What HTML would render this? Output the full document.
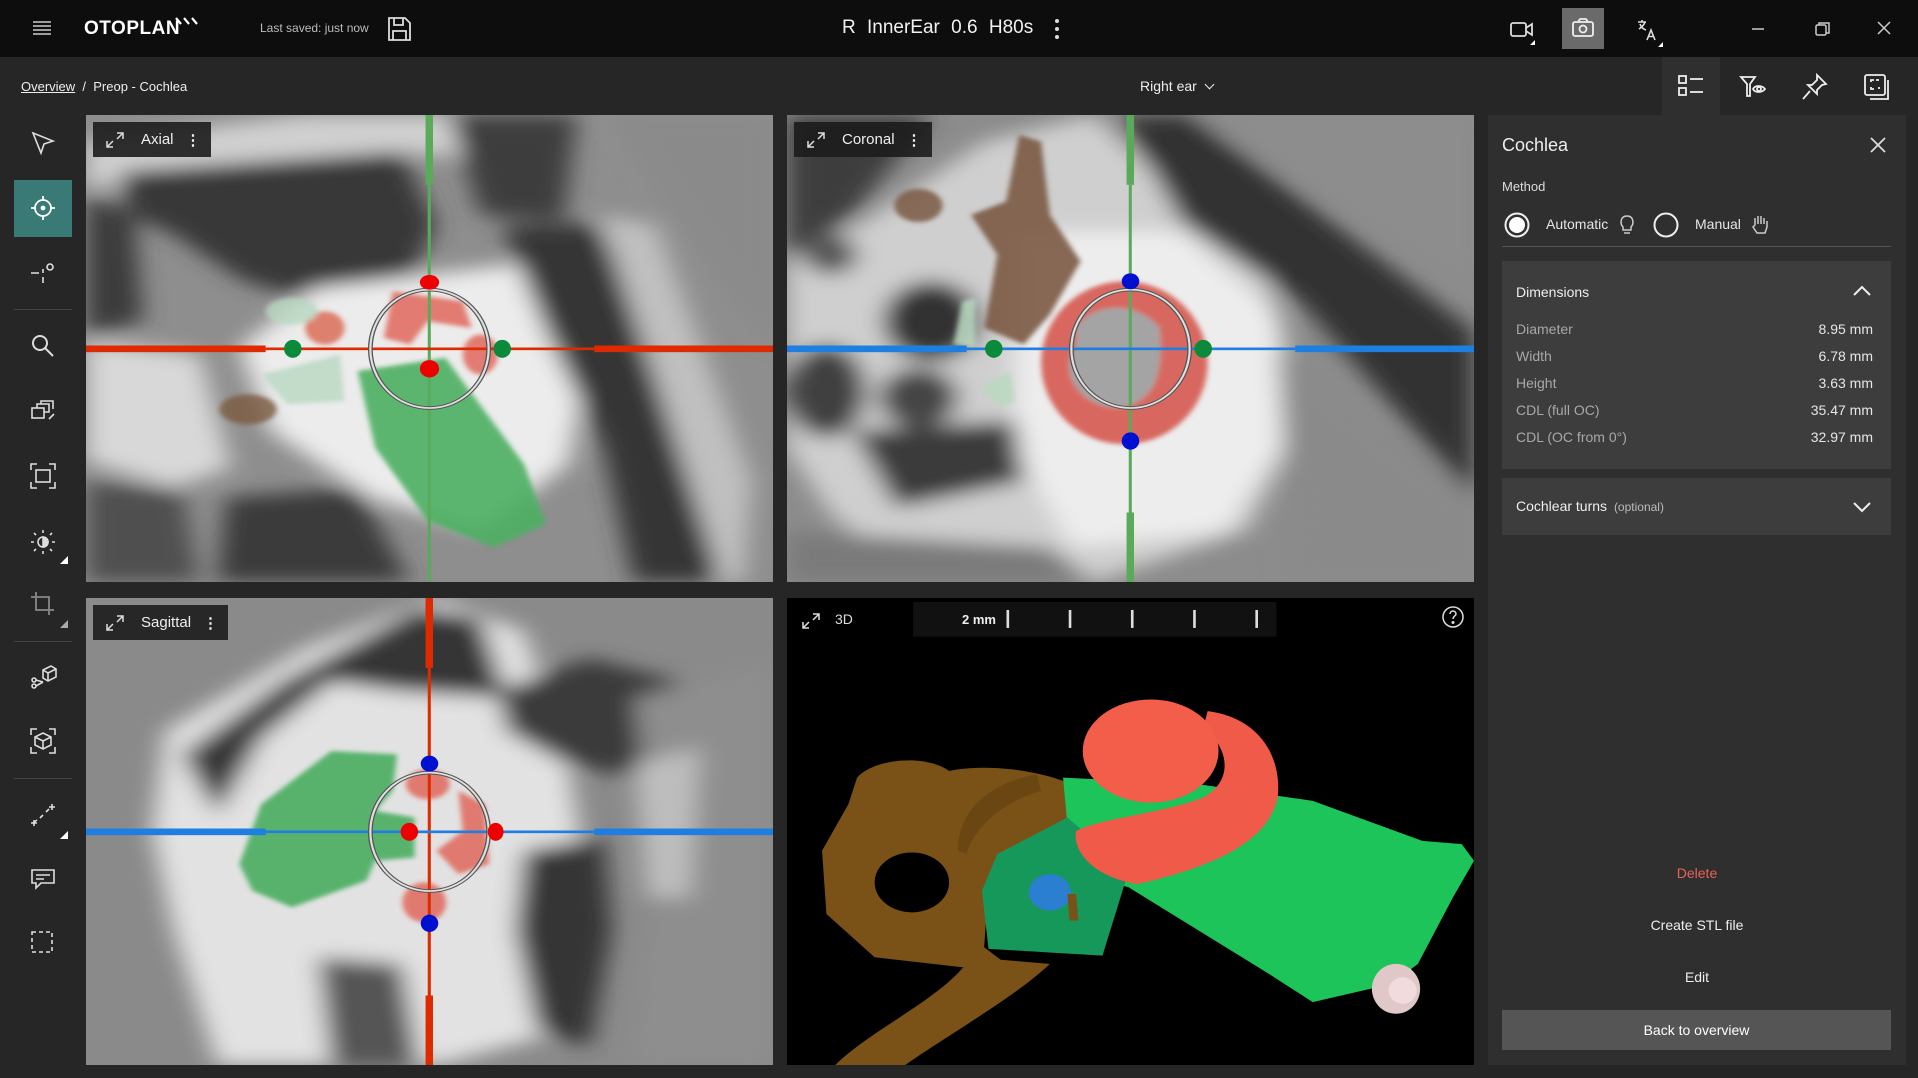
<!DOCTYPE html>
<html><head><meta charset="utf-8"><style>
*{margin:0;padding:0;box-sizing:border-box}
body{width:1918px;height:1078px;background:#262626;font-family:"Liberation Sans",sans-serif;color:#fff;position:relative;overflow:hidden}
.abs{position:absolute}
.top{left:0;top:0;width:1918px;height:57px;background:#0d0d0d}
.vp{position:absolute;width:687px;height:467px;overflow:hidden}
.vp svg.bg{position:absolute;left:0;top:0;width:687px;height:467px}
.lbl{position:absolute;left:7px;top:7px;height:35px;background:rgba(28,28,28,.9);display:flex;align-items:center;padding:0 10px 0 12px;font-size:15px;color:#eee}
.tb svg{position:absolute;left:29px;width:28px;height:28px}
.row{display:flex;justify-content:space-between;font-size:14px;height:27px;align-items:center}
.row span:first-child{color:#a8a8a8}
.row span:last-child{color:#e6e6e6}
</style></head><body>
<div class="abs top"></div>
<svg class="abs" style="left:33px;top:20px" width="18" height="16"><g stroke="#ccc" stroke-width="1.6"><line x1="0" y1="2" x2="18" y2="2"/><line x1="0" y1="6" x2="18" y2="6"/><line x1="0" y1="10" x2="18" y2="10"/><line x1="0" y1="14" x2="18" y2="14"/></g></svg>
<div class="abs" style="left:84px;top:18px;font-size:19px;font-weight:bold;letter-spacing:.5px">OTOPLAN</div>
<svg class="abs" style="left:174px;top:16px" width="30" height="14"><g stroke="#fff" stroke-width="2.2"><line x1="2" y1="2" x2="7" y2="8"/><line x1="10" y1="2" x2="15" y2="8"/><line x1="18" y1="2" x2="23" y2="8"/></g></svg>
<div class="abs" style="left:260px;top:21px;font-size:12px;color:#bbb">Last saved: just now</div>
<svg class="abs" style="left:386px;top:16px" width="26" height="26" fill="none" stroke="#ddd" stroke-width="1.8"><path d="M3 2h16l5 5v17H3z"/><path d="M8 2v7h9V2"/><path d="M7 24v-9h13v9"/></svg>
<div class="abs" style="left:842px;top:17px;font-size:19px;color:#f2f2f2;word-spacing:6px">R InnerEar 0.6 H80s</div>
<svg class="abs" style="left:1054px;top:18px" width="6" height="22" fill="#ddd"><circle cx="3" cy="3" r="2"/><circle cx="3" cy="11" r="2"/><circle cx="3" cy="19" r="2"/></svg>
<svg class="abs" style="left:1508px;top:18px" width="30" height="28" fill="none" stroke="#ddd" stroke-width="1.8"><rect x="3" y="5" width="15" height="13" rx="2"/><path d="M18 10l6-4v11l-6-4"/><path d="M27 27h-5l5-5z" fill="#fff" stroke="none"/></svg>
<div class="abs" style="left:1562px;top:8px;width:42px;height:41px;background:#6a6a6a"></div>
<svg class="abs" style="left:1571px;top:17px" width="24" height="22" fill="none" stroke="#eee" stroke-width="1.8"><rect x="2" y="5" width="20" height="14" rx="2"/><path d="M7 5l2-3h6l2 3"/><circle cx="12" cy="12" r="3.5"/></svg>
<svg class="abs" style="left:1634px;top:18px" width="30" height="30" fill="none" stroke="#ddd" stroke-width="1.6"><path d="M4 4h8M8 2v2M5 11c3-2 5-4 6-7M6 6c1 3 3 5 6 6"/><path d="M13 22l4-10 4 10M14.5 18.5h5"/><path d="M29 29h-5l5-5z" fill="#fff" stroke="none"/></svg>
<svg class="abs" style="left:1750px;top:24px" width="16" height="10"><line x1="2" y1="5" x2="14" y2="5" stroke="#ccc" stroke-width="1.5"/></svg>
<svg class="abs" style="left:1814px;top:20px" width="18" height="18" fill="none" stroke="#ccc" stroke-width="1.5"><rect x="2" y="5" width="10" height="10" rx="1.5"/><path d="M5 5V3h10v10h-3"/></svg>
<svg class="abs" style="left:1877px;top:21px" width="14" height="14" stroke="#ccc" stroke-width="1.5"><line x1="1" y1="1" x2="13" y2="13"/><line x1="13" y1="1" x2="1" y2="13"/></svg>

<div class="abs" style="left:21px;top:79px;font-size:13px;color:#eee"><span style="text-decoration:underline">Overview</span>&nbsp; / &nbsp;Preop - Cochlea</div>
<div class="abs" style="left:1140px;top:78px;font-size:14px;color:#eee">Right ear <span style="display:inline-block;width:7px;height:7px;border-right:1.6px solid #eee;border-bottom:1.6px solid #eee;transform:rotate(45deg);margin-left:5px;position:relative;top:-3px"></span></div>
<div class="abs" style="left:1662px;top:57px;width:58px;height:58px;background:#2f2f2f"></div>
<svg class="abs" style="left:1677px;top:73px" width="28" height="28" fill="none" stroke="#eee" stroke-width="1.8"><rect x="2" y="3" width="7" height="7"/><rect x="2" y="15" width="7" height="7"/><line x1="13" y1="6" x2="26" y2="6"/><line x1="13" y1="19" x2="26" y2="19"/></svg>
<svg class="abs" style="left:1739px;top:73px" width="30" height="28" fill="none" stroke="#eee" stroke-width="1.8"><path d="M2 4h14l-5 7v12h-3V11z"/><path d="M14 16c2-4 9-4 12 0c-3 4-10 4-12 0z"/><circle cx="20" cy="16" r="2"/></svg>
<svg class="abs" style="left:1801px;top:73px" width="28" height="28" fill="none" stroke="#eee" stroke-width="1.8"><path d="M16 2l9 9-4 1-5 5 0 4-9-9 4 0 5-5z"/><line x1="9" y1="18" x2="2" y2="26"/></svg>
<svg class="abs" style="left:1863px;top:73px" width="28" height="28" fill="none" stroke="#eee" stroke-width="1.8"><rect x="2" y="2" width="20" height="20" rx="2"/><path d="M7 26h18V7"/><path d="M8 9V7h3M16 7h-3M16 16v-2M8 14v2h3"/></svg>

<div class="abs" style="left:14px;top:180px;width:58px;height:57px;background:#3a7a76"></div>
<div class="abs" style="left:14px;top:309px;width:58px;height:1px;background:#444"></div>
<div class="abs" style="left:14px;top:641px;width:58px;height:1px;background:#444"></div>
<div class="abs" style="left:14px;top:778px;width:58px;height:1px;background:#444"></div>
<div class="tb">
<svg style="top:129px" fill="none" stroke="#ddd" stroke-width="1.6"><path d="M4 4l20 8-9 3-3 9z"/></svg>
<svg style="top:194px" fill="none" stroke="#fff" stroke-width="1.8"><circle cx="14" cy="14" r="8"/><circle cx="14" cy="14" r="1.5" fill="#fff"/><path d="M14 2v4M14 22v4M2 14h4M22 14h4"/></svg>
<svg style="top:258px" fill="none" stroke="#ddd" stroke-width="1.6"><path d="M2 15h8M14 11v4M14 19v6"/><circle cx="21" cy="9" r="3"/></svg>
<svg style="top:332px" fill="none" stroke="#ddd" stroke-width="2"><circle cx="11" cy="11" r="7"/><path d="M16 16l8 8"/></svg>
<svg style="top:397px" fill="none" stroke="#ddd" stroke-width="1.6"><rect x="3" y="11" width="12" height="10"/><path d="M8 11V7h12v8h-5M12 7V4h12v8M20 22l5-5"/></svg>
<svg style="top:462px" fill="none" stroke="#ddd" stroke-width="1.6"><path d="M2 8V2h6M20 2h6v6M26 20v6h-6M8 26H2v-6"/><rect x="7" y="8" width="14" height="12"/></svg>
<svg style="top:528px" fill="none" stroke="#ddd" stroke-width="1.6"><circle cx="14" cy="14" r="5"/><path d="M14 9a5 5 0 010 10z" fill="#ddd"/><path d="M14 2v3M14 23v3M2 14h3M23 14h3M5 5l2 2M21 21l2 2M5 23l2-2M21 7l2-2"/></svg>
<svg style="top:590px" fill="none" stroke="#888" stroke-width="1.8"><path d="M7 2v18h18M2 7h18v18"/></svg>
<svg style="top:662px" fill="none" stroke="#ddd" stroke-width="1.6"><path d="M14 8l8-4 5 3v8l-8 4-5-3z M14 8l5 3 8-4 M19 11v8"/><circle cx="5" cy="18" r="2"/><circle cx="5" cy="24" r="2"/><path d="M7 18l7 2M7 24l7-4"/></svg>
<svg style="top:727px" fill="none" stroke="#ddd" stroke-width="1.6"><path d="M2 8V2h6M20 2h6v6M26 20v6h-6M8 26H2v-6"/><path d="M14 6l8 4v8l-8 4-8-4v-8z M6 10l8 4 8-4 M14 14v8"/></svg>
<svg style="top:801px" fill="none" stroke="#ddd" stroke-width="1.6"><path d="M4 22l4-3M11 17l3-3M17 11l3-3" /><path d="M2 22h6M5 19v6M20 6h6M23 3v6"/></svg>
<svg style="top:865px" fill="none" stroke="#ddd" stroke-width="1.6"><path d="M3 5h22v13H12l-5 5v-5H3z"/><path d="M7 10h14M7 14h8"/></svg>
<svg style="top:929px" fill="none" stroke="#ddd" stroke-width="1.6" stroke-dasharray="4 3"><rect x="3" y="3" width="20" height="20"/></svg>
</div>
<svg class="abs" style="left:60px;top:556px" width="8" height="8"><path d="M8 0v8H0z" fill="#fff"/></svg>
<svg class="abs" style="left:60px;top:620px" width="8" height="8"><path d="M8 0v8H0z" fill="#aaa"/></svg>
<svg class="abs" style="left:60px;top:831px" width="8" height="8"><path d="M8 0v8H0z" fill="#fff"/></svg>

<svg width="0" height="0" style="position:absolute"><defs>
<filter id="b" x="-10%" y="-10%" width="120%" height="120%"><feGaussianBlur stdDeviation="28"/></filter>
<filter id="b2"><feGaussianBlur stdDeviation="6"/></filter>
</defs></svg>

<!-- AXIAL -->
<div class="vp" style="left:86px;top:115px">
<svg class="bg" viewBox="0 0 1568 1404" preserveAspectRatio="none">
<rect width="1568" height="1404" fill="#8e8e8e"/>
<g filter="url(#b)">
<path d="M0 80L500 0 1000 0 1100 150 700 110 350 160 0 220z" fill="#d0d0d0"/>
<path d="M80 170L720 110 800 330 720 540 520 560 360 500 200 360 100 300z" fill="#383838"/>
<path d="M0 240L110 300 130 620 0 660z" fill="#3a3a3a"/>
<path d="M520 520L1100 430 1150 700 1100 1050 900 1250 650 1150 420 950 350 700z" fill="#ececec"/>
<path d="M0 680L260 720 330 1060 200 1120 0 1040z" fill="#d8d8d8"/>
<path d="M0 1100L220 1130 260 1404 0 1404z" fill="#505050"/>
<path d="M320 1150L620 1120 740 1404 300 1404z" fill="#3a3a3a"/>
<path d="M950 330L1160 330 1330 700 1470 1100 1430 1404 1250 1404 1180 1000 1050 650z" fill="#363636"/>
<path d="M830 0L1120 0 1090 320 900 300z" fill="#3c3c3c"/>
<path d="M1170 300L1300 330 1520 1100 1500 1404 1450 1404 1300 800z" fill="#c0c0c0"/>
<path d="M1200 0L1568 0 1568 700 1320 260z" fill="#8a8a8a"/>
</g>
<g filter="url(#b2)">
<path d="M620 770L820 730 1000 1050 1050 1230 930 1300 780 1220 660 1000z" fill="#4caf63" opacity=".9"/>
<path d="M700 530L860 560 880 640 780 620 740 690 680 670z" fill="#e0675c" opacity=".85"/>
<ellipse cx="900" cy="720" rx="40" ry="60" fill="#e0675c" opacity=".85"/>
<ellipse cx="545" cy="640" rx="45" ry="50" fill="#d9674f" opacity=".8"/>
<ellipse cx="370" cy="885" rx="65" ry="45" fill="#7a5a40" opacity=".8"/>
<ellipse cx="470" cy="590" rx="60" ry="40" fill="#b8d8c0" opacity=".8"/>
<path d="M400 780L580 720 590 860 460 870z" fill="#b8d8c0" opacity=".8"/>
</g>
<rect x="775" y="0" width="17" height="210" fill="#5aaa5a"/>
<rect x="780" y="210" width="7" height="1194" fill="#5aaa5a"/>
<rect x="0" y="693" width="410" height="20" fill="#dd2a00"/>
<rect x="1160" y="693" width="408" height="20" fill="#dd2a00"/>
<rect x="410" y="699" width="750" height="8" fill="#dd2a00"/>
<ellipse cx="784" cy="703" rx="135" ry="178" fill="none" stroke="#555" stroke-width="11"/>
<ellipse cx="784" cy="703" rx="135" ry="178" fill="none" stroke="#e0e0e0" stroke-width="5"/>
<ellipse cx="784" cy="503" rx="22" ry="22" fill="#e00"/>
<ellipse cx="784" cy="763" rx="22" ry="26" fill="#e00"/>
<ellipse cx="472" cy="703" rx="20" ry="27" fill="#0a8a3a"/>
<ellipse cx="950" cy="703" rx="20" ry="27" fill="#0a8a3a"/>
</svg>
<div class="lbl"><svg width="20" height="18" fill="none" stroke="#ddd" stroke-width="1.5"><path d="M12 2h6v6M18 2l-6 6M8 16H2v-6M2 16l6-6"/></svg><span style="margin-left:16px">Axial</span><span style="margin-left:12px;font-weight:bold">⋮</span></div>
</div>

<!-- CORONAL -->
<div class="vp" style="left:787px;top:115px">
<svg class="bg" viewBox="0 0 1568 1404" preserveAspectRatio="none">
<rect width="1568" height="1404" fill="#8c8c8c"/>
<g filter="url(#b)">
<path d="M0 450L200 300 450 80 700 0 900 250 1100 500 1180 900 1050 1250 700 1404 300 1404 100 1200 0 1000z" fill="#cfcfcf"/>
<path d="M520 350L900 350 1120 600 1150 950 1000 1250 650 1300 520 1000z" fill="#ededed"/>
<path d="M0 0L330 0 150 300 0 420z" fill="#3e3e3e"/>
<ellipse cx="330" cy="620" rx="110" ry="120" fill="#333"/>
<ellipse cx="100" cy="420" rx="60" ry="60" fill="#555"/>
<ellipse cx="90" cy="830" rx="90" ry="140" fill="#404040"/>
<ellipse cx="300" cy="850" rx="90" ry="90" fill="#444"/>
<path d="M150 950L520 920 540 1100 250 1180z" fill="#3a3a3a"/>
<path d="M760 0L920 0 1568 650 1568 1150 1170 560 900 320z" fill="#333"/>
<path d="M1120 700L1568 1150 1568 1404 1150 1404z" fill="#8a8a8a"/>
<path d="M0 1250L600 1300 700 1404 0 1404z" fill="#7a7a7a"/>
<path d="M920 0L1568 0 1568 520z" fill="#8d8d8d"/>
</g>
<g filter="url(#b2)">
<path d="M530 60L580 80 600 300 670 440 600 600 540 690 450 640 480 420 420 300 500 260z" fill="#7a5a42" opacity=".9"/>
<ellipse cx="300" cy="272" rx="55" ry="50" fill="#7a5a42" opacity=".85"/>
<ellipse cx="770" cy="745" rx="190" ry="245" fill="#d55a50" opacity=".9"/>
<path d="M660 640C700 560 800 560 850 640 860 780 840 860 760 880 660 880 620 760 660 700z" fill="#a4a4a4"/>
<path d="M400 560L430 550 430 700 380 690z" fill="#b8d8c0" opacity=".85"/>
<path d="M440 820L510 770 520 860 490 880z" fill="#b8d8c0" opacity=".85"/>
</g>
<rect x="775" y="0" width="17" height="210" fill="#5aaa5a"/>
<rect x="780" y="210" width="7" height="1194" fill="#5aaa5a"/>
<rect x="775" y="1195" width="17" height="209" fill="#5aaa5a"/>
<rect x="0" y="693" width="410" height="20" fill="#1f7fe0"/>
<rect x="1160" y="693" width="408" height="20" fill="#1f7fe0"/>
<rect x="410" y="699" width="750" height="8" fill="#1f7fe0"/>
<ellipse cx="784" cy="703" rx="135" ry="178" fill="none" stroke="#555" stroke-width="11"/>
<ellipse cx="784" cy="703" rx="135" ry="178" fill="none" stroke="#e0e0e0" stroke-width="5"/>
<ellipse cx="784" cy="500" rx="20" ry="24" fill="#0010d0"/>
<ellipse cx="784" cy="980" rx="20" ry="26" fill="#0010d0"/>
<ellipse cx="472" cy="703" rx="20" ry="27" fill="#0a8a3a"/>
<ellipse cx="950" cy="703" rx="20" ry="27" fill="#0a8a3a"/>
</svg>
<div class="lbl"><svg width="20" height="18" fill="none" stroke="#ddd" stroke-width="1.5"><path d="M12 2h6v6M18 2l-6 6M8 16H2v-6M2 16l6-6"/></svg><span style="margin-left:16px">Coronal</span><span style="margin-left:12px;font-weight:bold">⋮</span></div>
</div>

<!-- SAGITTAL -->
<div class="vp" style="left:86px;top:598px">
<svg class="bg" viewBox="0 0 1568 1404" preserveAspectRatio="none">
<rect width="1568" height="1404" fill="#8a8a8a"/>
<g filter="url(#b)">
<path d="M180 400L500 150 800 0 1000 100 1100 500 1150 900 1100 1300 800 1404 300 1404 200 1000 150 700z" fill="#e2e2e2"/>
<path d="M220 470L450 250 760 30 900 60 960 300 720 280 560 250 400 420 300 650z" fill="#363636"/>
<path d="M940 280L1150 180 1350 250 1300 550 1100 500 960 400z" fill="#3a3a3a"/>
<path d="M1000 760L1180 720 1200 1000 1150 1350 1030 1300 980 1000z" fill="#363636"/>
<path d="M530 1080L720 1100 760 1404 560 1404z" fill="#555"/>
<path d="M1250 300L1568 200 1568 1404 1250 1404 1300 800z" fill="#8e8e8e"/>
<path d="M1250 500L1400 450 1380 900 1280 900z" fill="#bdbdbd"/>
</g>
<g filter="url(#b2)">
<path d="M560 460L710 470 700 580 660 640 750 660 750 780 660 790 640 850 470 930 380 880 350 800 400 620z" fill="#4caf63" opacity=".92"/>
<ellipse cx="780" cy="560" rx="50" ry="45" fill="#e0675c" opacity=".85"/>
<path d="M850 580L910 620 920 800 850 830 800 760 860 700z" fill="#e0675c" opacity=".85"/>
<ellipse cx="772" cy="915" rx="50" ry="60" fill="#e0675c" opacity=".85"/>
</g>
<rect x="775" y="0" width="17" height="210" fill="#dd2a00"/>
<rect x="780" y="210" width="7" height="1194" fill="#dd2a00"/>
<rect x="775" y="1195" width="17" height="209" fill="#dd2a00"/>
<rect x="0" y="693" width="410" height="20" fill="#1f7fe0"/>
<rect x="1160" y="693" width="408" height="20" fill="#1f7fe0"/>
<rect x="410" y="699" width="750" height="8" fill="#1f7fe0"/>
<ellipse cx="784" cy="703" rx="135" ry="178" fill="none" stroke="#555" stroke-width="11"/>
<ellipse cx="784" cy="703" rx="135" ry="178" fill="none" stroke="#e0e0e0" stroke-width="5"/>
<ellipse cx="784" cy="498" rx="20" ry="24" fill="#0010d0"/>
<ellipse cx="784" cy="978" rx="20" ry="26" fill="#0010d0"/>
<ellipse cx="738" cy="703" rx="20" ry="27" fill="#e00"/>
<ellipse cx="935" cy="703" rx="18" ry="27" fill="#e00"/>
</svg>
<div class="lbl"><svg width="20" height="18" fill="none" stroke="#ddd" stroke-width="1.5"><path d="M12 2h6v6M18 2l-6 6M8 16H2v-6M2 16l6-6"/></svg><span style="margin-left:16px">Sagittal</span><span style="margin-left:12px;font-weight:bold">⋮</span></div>
</div>

<!-- 3D -->
<div class="vp" style="left:787px;top:598px;background:#000">
<svg class="bg" viewBox="0 0 1568 1404" preserveAspectRatio="none">
<rect x="288" y="12" width="829" height="104" fill="#111"/>
<g stroke="#ddd" stroke-width="6"><line x1="504" y1="36" x2="504" y2="90"/><line x1="646" y1="36" x2="646" y2="90"/><line x1="788" y1="36" x2="788" y2="90"/><line x1="930" y1="36" x2="930" y2="90"/><line x1="1072" y1="36" x2="1072" y2="90"/></g>
<path d="M420 1080C360 1200 200 1290 110 1404L270 1404C360 1320 520 1200 600 1100z" fill="#7a5218"/>
<path d="M160 540C200 480 320 470 370 520 440 500 560 510 650 560L660 690 560 780 460 860 450 1050 500 1100 400 1110 200 1080 90 950 80 760 140 620z" fill="#7a5218"/>
<path d="M390 760C390 650 450 560 570 530L580 580C500 610 430 680 410 770z" fill="#6a4612"/>
<ellipse cx="285" cy="855" rx="85" ry="90" fill="#000"/>
<path d="M630 540L940 560 1200 610 1450 730 1540 740 1568 790 1520 900 1440 1100 1380 1160 1200 1215 1100 1130 780 870 650 820z" fill="#1cc45a"/>
<path d="M480 770L640 660 780 820 720 1075 460 1055 445 880z" fill="#16985a"/>
<path d="M960 340C1080 360 1130 480 1120 600 1100 720 1000 800 800 860 700 840 650 760 660 700 720 660 850 650 950 600 1020 550 1010 450 950 390z" fill="#f05a48"/>
<ellipse cx="830" cy="460" rx="155" ry="155" fill="#f25e4a"/>
<ellipse cx="600" cy="885" rx="48" ry="55" fill="#2a7fd0"/>
<path d="M640 890L660 890 665 970 645 970z" fill="#7a5218"/>
<ellipse cx="1390" cy="1175" rx="55" ry="75" fill="#e0c8c8"/>
<ellipse cx="1405" cy="1180" rx="32" ry="40" fill="#f0dcdc"/>
</svg>
<div class="abs" style="top:13px;font-size:14px;color:#ddd;left:48px">3D</div>
<svg class="abs" style="left:14px;top:14px" width="20" height="18" fill="none" stroke="#ddd" stroke-width="1.5"><path d="M12 2h6v6M18 2l-6 6M8 16H2v-6M2 16l6-6"/></svg>
<div class="abs" style="left:175px;top:14px;font-size:13px;font-weight:bold;color:#eee">2 mm</div>
<svg class="abs" style="left:654px;top:7px" width="24" height="24" fill="none" stroke="#ddd" stroke-width="1.5"><circle cx="12" cy="12" r="10"/><path d="M9 9a3 3 0 116 0c0 2-3 2-3 5"/><circle cx="12" cy="17.5" r=".8" fill="#ddd"/></svg>
</div>

<div class="abs" style="left:1488px;top:115px;width:418px;height:950px;background:#2f2f2f">
<div class="abs" style="left:14px;top:20px;font-size:18px;color:#eee">Cochlea</div>
<svg class="abs" style="left:382px;top:22px" width="16" height="16" stroke="#ddd" stroke-width="1.8"><line x1="1" y1="1" x2="15" y2="15"/><line x1="15" y1="1" x2="1" y2="15"/></svg>
<div class="abs" style="left:14px;top:64px;font-size:13px;color:#ddd">Method</div>
<svg class="abs" style="left:16px;top:97px" width="28" height="28"><circle cx="13" cy="13" r="11.5" fill="none" stroke="#eee" stroke-width="2"/><circle cx="13" cy="13" r="8" fill="#fff"/></svg>
<div class="abs" style="left:58px;top:101px;font-size:14px;color:#e6e6e6">Automatic</div>
<svg class="abs" style="left:131px;top:98px" width="16" height="22" fill="none" stroke="#ccc" stroke-width="1.5"><path d="M4 14c-3-3-3-11 4-11s7 8 4 11v3H4z"/><line x1="5" y1="20" x2="11" y2="20"/></svg>
<svg class="abs" style="left:165px;top:97px" width="28" height="28"><circle cx="13" cy="13" r="11.5" fill="none" stroke="#eee" stroke-width="2"/></svg>
<div class="abs" style="left:207px;top:101px;font-size:14px;color:#e6e6e6">Manual</div>
<svg class="abs" style="left:263px;top:98px" width="18" height="22" fill="none" stroke="#ccc" stroke-width="1.5"><path d="M4 12V5M7 11V3M10 11V3M13 11V5M4 12l-2 2 4 6h8l2-6v-6"/></svg>
<div class="abs" style="left:14px;top:131px;width:389px;height:1px;background:#555"></div>
<div class="abs" style="left:14px;top:146px;width:389px;height:208px;background:#3d3d3d">
<div class="abs" style="left:14px;top:23px;font-size:14px;color:#eee">Dimensions</div>
<svg class="abs" style="left:350px;top:24px" width="20" height="12" fill="none" stroke="#eee" stroke-width="2"><path d="M2 10l8-8 8 8"/></svg>
<div class="abs" style="left:14px;top:54px;width:357px">
<div class="row"><span>Diameter</span><span>8.95 mm</span></div>
<div class="row"><span>Width</span><span>6.78 mm</span></div>
<div class="row"><span>Height</span><span>3.63 mm</span></div>
<div class="row"><span>CDL (full OC)</span><span>35.47 mm</span></div>
<div class="row"><span>CDL (OC from 0°)</span><span>32.97 mm</span></div>
</div>
</div>
<div class="abs" style="left:14px;top:363px;width:389px;height:57px;background:#3d3d3d">
<div class="abs" style="left:14px;top:20px;font-size:14px;color:#eee">Cochlear turns <span style="font-size:12px;color:#bbb;margin-left:3px">(optional)</span></div>
<svg class="abs" style="left:350px;top:23px" width="20" height="12" fill="none" stroke="#eee" stroke-width="2"><path d="M2 2l8 8 8-8"/></svg>
</div>
<div class="abs" style="left:0;width:418px;top:750px;text-align:center;font-size:14px;color:#e8625a">Delete</div>
<div class="abs" style="left:0;width:418px;top:802px;text-align:center;font-size:14px;color:#eee">Create STL file</div>
<div class="abs" style="left:0;width:418px;top:854px;text-align:center;font-size:14px;color:#eee">Edit</div>
<div class="abs" style="left:14px;top:895px;width:389px;height:40px;background:#555;text-align:center;line-height:40px;font-size:14px;color:#fff">Back to overview</div>
</div>
</body></html>
